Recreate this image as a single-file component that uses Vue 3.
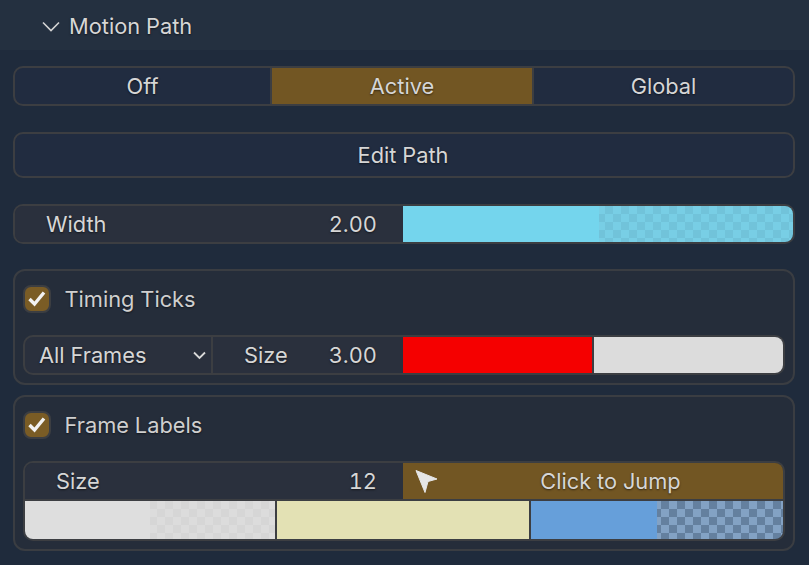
<script setup>
const modes = [
  { label: 'Off', cls: 'off' },
  { label: 'Active', cls: 'on' },
  { label: 'Global', cls: 'rest' },
]
</script>

<template>
  <div class="page">
    <header class="head">
      <svg class="chev" width="18" height="11" viewBox="0 0 18 11"><path d="M1 1.500l8 8 8-8" fill="none" stroke="#d4d4d4" stroke-width="1.6" /></svg>
      <span>Motion Path</span>
    </header>

    <main class="body">
      <div class="seg box">
        <div v-for="m in modes" :key="m.label" class="seg-item" :class="m.cls">{{ m.label }}</div>
      </div>

      <div class="edit box">Edit Path</div>

      <div class="width box">
        <div class="num left-w"><span>Width</span><span>2.00</span></div>
        <div class="swatch right-w cyan"><i class="solid s196"></i><i class="check"></i></div>
      </div>

      <section class="panel p1">
        <label class="check-row">
          <span class="cb"><svg width="20" height="18" viewBox="0 0 20 18"><path d="M2.500 9l5 5 9.500-11.500" fill="none" stroke="#f2f2f2" stroke-width="3.400" /></svg></span>
          <span>Timing Ticks</span>
        </label>
        <div class="row box">
          <div class="drop"><span>All Frames</span><svg width="13" height="9" viewBox="0 0 13 9"><path d="M1 1.500l5.500 5.500 5.500-5.500" fill="none" stroke="#d8d8d8" stroke-width="1.800" /></svg></div>
          <div class="size"><span>Size</span><span>3.00</span></div>
          <div class="red"></div>
          <div class="gray"></div>
        </div>
      </section>

      <section class="panel p2">
        <label class="check-row">
          <span class="cb"><svg width="20" height="18" viewBox="0 0 20 18"><path d="M2.500 9l5 5 9.500-11.500" fill="none" stroke="#f2f2f2" stroke-width="3.400" /></svg></span>
          <span>Frame Labels</span>
        </label>
        <div class="grid box">
          <div class="line top">
            <div class="num left-g"><span>Size</span><span>12</span></div>
            <div class="jump">
              <svg class="cursor" width="24" height="26" viewBox="0 0 24 26"><path d="M2 1.500L23 10l-9 2.500-3 11z" fill="#e6e6e6" stroke="#e6e6e6" stroke-width="1" stroke-linejoin="round" /></svg>
              <span>Click to Jump</span>
            </div>
          </div>
          <div class="line colors">
            <div class="swatch white"><i class="solid s125"></i><i class="check"></i></div>
            <div class="yellow"></div>
            <div class="swatch blue"><i class="solid s126"></i><i class="check"></i></div>
          </div>
        </div>
      </section>
    </main>
  </div>
</template>

<style scoped>
.page {
  width: 809px;
  height: 565px;
  overflow: hidden;
  background: #1f2b3c;
  color: #d6d6d6;
  font-family: Inter, "Liberation Sans", sans-serif;
  font-size: 21.8px;
  font-variant-numeric: tabular-nums;
  text-shadow: 0 1px 2px rgba(0, 0, 0, .55);
}
.head {
  height: 50px;
  box-sizing: border-box;
  display: flex;
  align-items: center;
  padding: 2px 0 0 42px;
  gap: 9px;
  background: #243040;
}
.chev { flex: none; }
.body {
  display: flex;
  flex-direction: column;
  padding: 16px 14px 0 13px;
}
.box {
  box-sizing: border-box;
  border: 2px solid #3c3e42;
  border-radius: 10px;
  overflow: hidden;
}
.seg {
  display: flex;
  height: 40px;
  background: #212c40;
}
.seg-item {
  box-sizing: border-box;
  display: flex;
  align-items: center;
  justify-content: center;
}
.seg-item.off { width: 255px; flex: none; }
.seg-item.on {
  width: 264px;
  flex: none;
  background: #725623;
  border-left: 2px solid #3c3e42;
  border-right: 2px solid #3c3e42;
}
.seg-item.rest { flex: 1; }
.edit {
  margin-top: 26px;
  height: 46px;
  display: flex;
  align-items: center;
  justify-content: center;
  padding-right: 2px;
  background: #212c40;
}
.width {
  margin-top: 26px;
  height: 40px;
  display: flex;
  background: #2a303d;
}
.left-w { box-sizing: border-box; width: 388px; flex: none; }
.right-w { flex: 1; min-width: 0; }
.left-g { box-sizing: border-box; width: 378px; flex: none; }
.num {
  display: flex;
  justify-content: space-between;
  align-items: center;
  padding: 0 26px 0 31px;
  background: #2a303d;
}
.swatch { display: flex; }
.swatch .check { flex: 1 1 0; display: block; }
.swatch .solid { display: block; flex: none; background: var(--c); }
.s196 { width: 196px; }
.s125 { width: 125px; }
.s126 { width: 126px; }
.cyan { --c: #74d5ed; --d: #78cee5; --e: #71c3da; --p: -2px; }
.white { --c: #dedede; --d: #dcdcdc; --e: #d6d6d6; --p: 7px; }
.blue { --c: #669fda; --d: #83a2c4; --e: #64809f; --p: -4px; }
.swatch .check {
  background: repeating-conic-gradient(var(--e) 0 25%, var(--d) 0 50%) var(--p) 0 / 16px 16px;
}
.panel {
  box-sizing: border-box;
  border: 2px solid #3a3d42;
  border-radius: 12px;
  background: #252d3a;
  padding: 0 8px;
}
.p1 { margin-top: 25px; height: 116px; }
.p2 { margin-top: 10px; height: 156px; }
.check-row {
  display: flex;
  align-items: center;
  gap: 13.500px;
  height: 28px;
  margin-top: 14px;
  color: #cfcfcf;
}
.cb {
  box-sizing: border-box;
  width: 28px;
  height: 28px;
  display: flex;
  align-items: center;
  justify-content: center;
  background: #7a5c25;
  border: 2px solid #3c3e42;
  border-radius: 8px;
}
.row {
  margin-top: 22px;
  height: 40px;
  display: flex;
  background: #2a303d;
}
.drop {
  box-sizing: border-box;
  width: 188px;
  flex: none;
  display: flex;
  align-items: center;
  justify-content: space-between;
  padding: 0 5px 0 14px;
  border-right: 2px solid #3c3e42;
}
.size {
  box-sizing: border-box;
  width: 190px;
  flex: none;
  display: flex;
  align-items: center;
  justify-content: space-between;
  padding: 0 26px 0 31px;
}
.red { box-sizing: border-box; width: 191px; flex: none; background: #f50000; border-right: 2px solid #3c3e42; }
.gray { flex: 1; background: #dcdcdc; }
.grid {
  margin-top: 22px;
  height: 80px;
  display: flex;
  flex-direction: column;
  background: #2a303d;
}
.line { display: flex; }
.top { border-bottom: 2px solid #3c3e42; height: 38px; flex: none; box-sizing: border-box; }
.jump {
  position: relative;
  flex: 1;
  min-width: 0;
  display: flex;
  align-items: center;
  justify-content: center;
  padding-left: 35px;
  background: #725623;
}
.cursor {
  position: absolute;
  left: 11px;
  top: 6px;
}
.colors { flex: 1; min-height: 0; }
.colors .white { width: 250px; flex: none; }
.colors .blue { flex: 1; min-width: 0; }
.yellow {
  box-sizing: border-box;
  width: 256px;
  flex: none;
  background: #e3e1b4;
  border-left: 2px solid #3c3e42;
  border-right: 2px solid #3c3e42;
}
</style>
